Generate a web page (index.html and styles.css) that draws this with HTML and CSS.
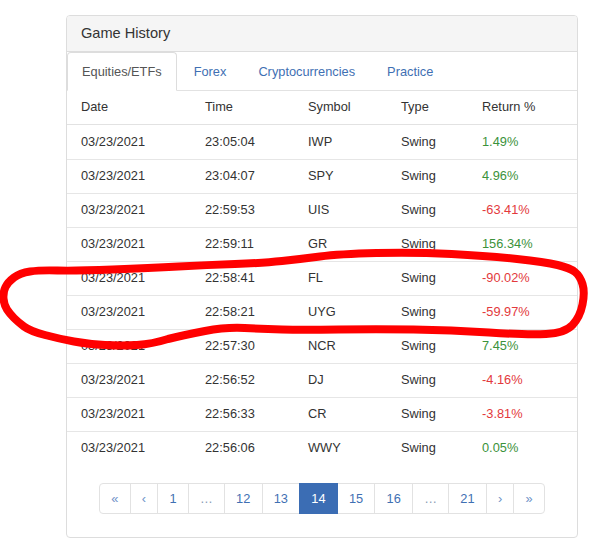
FILE: index.html
```html
<!DOCTYPE html>
<html>
<head>
<meta charset="utf-8">
<link rel="stylesheet" href="styles.css">
</head>
<body>
<div class="panel">
  <div class="panel-heading">Game History</div>
  <ul class="tabs">
    <li class="tab active">Equities/ETFs</li>
    <li class="tab">Forex</li>
    <li class="tab">Cryptocurrencies</li>
    <li class="tab">Practice</li>
  </ul>
  <div class="table">
    <div class="row head"><span>Date</span><span>Time</span><span>Symbol</span><span>Type</span><span>Return %</span></div>
    <div class="row"><span>03/23/2021</span><span>23:05:04</span><span>IWP</span><span>Swing</span><span class="up">1.49%</span></div>
    <div class="row"><span>03/23/2021</span><span>23:04:07</span><span>SPY</span><span>Swing</span><span class="up">4.96%</span></div>
    <div class="row"><span>03/23/2021</span><span>22:59:53</span><span>UIS</span><span>Swing</span><span class="down">-63.41%</span></div>
    <div class="row"><span>03/23/2021</span><span>22:59:11</span><span>GR</span><span>Swing</span><span class="up">156.34%</span></div>
    <div class="row"><span>03/23/2021</span><span>22:58:41</span><span>FL</span><span>Swing</span><span class="down">-90.02%</span></div>
    <div class="row"><span>03/23/2021</span><span>22:58:21</span><span>UYG</span><span>Swing</span><span class="down">-59.97%</span></div>
    <div class="row"><span>03/23/2021</span><span>22:57:30</span><span>NCR</span><span>Swing</span><span class="up">7.45%</span></div>
    <div class="row"><span>03/23/2021</span><span>22:56:52</span><span>DJ</span><span>Swing</span><span class="down">-4.16%</span></div>
    <div class="row"><span>03/23/2021</span><span>22:56:33</span><span>CR</span><span>Swing</span><span class="down">-3.81%</span></div>
    <div class="row"><span>03/23/2021</span><span>22:56:06</span><span>WWY</span><span>Swing</span><span class="up">0.05%</span></div>
  </div>
  <div class="pager-wrap">
    <ul class="pager">
      <li class="pg arrow">«</li>
      <li class="pg arrow">‹</li>
      <li class="pg">1</li>
      <li class="pg dots">…</li>
      <li class="pg">12</li>
      <li class="pg">13</li>
      <li class="pg current">14</li>
      <li class="pg">15</li>
      <li class="pg">16</li>
      <li class="pg dots">…</li>
      <li class="pg">21</li>
      <li class="pg arrow">›</li>
      <li class="pg arrow">»</li>
    </ul>
  </div>
</div>
<svg class="scribble" width="590" height="552" viewBox="0 0 590 552">
  <path d="M14 277.5 Q20 273 30 271.5 Q40 270 57.5 270.5 Q75 271 112.5 269.5 Q150 268 178.5 266.5 Q207 265 235 264 Q263 263 282 261 Q301 259 320 256.5 Q339 254 376.5 253 Q414 252 451.5 254 Q489 256 517 259 Q545 262 557.5 265 Q570 268 575 272 Q580 276 582.5 284 Q585 292 582.5 304.5 Q580 317 572.5 325 Q565 333 546 334 Q527 335 489 332.5 Q451 330 413.5 329.5 Q376 329 338.5 329.5 Q301 330 282 329.5 Q263 329 244.5 328 Q226 327 205 331 Q184 335 168 339 Q152 344 137 345 Q122 346 105 345 Q88 344 74 341.5 Q60 339 45 335 Q30 331 24 326.5 Q18 322 14 318 Q10 314 7 309.5 Q4 305 3.5 298.5 Q3 292 5.5 287 Q8 282 14 277.5 Z"/>
</svg>
</body>
</html>
```

FILE: styles.css
```css
html, body {
  margin: 0;
  padding: 0;
  background: #fff;
}
body {
  font-family: "Liberation Sans", Arial, sans-serif;
  font-size: 12.8px;
  color: #333;
  position: relative;
  width: 590px;
  height: 552px;
  overflow: hidden;
}
.panel {
  box-sizing: border-box;
  width: 512px;
  margin: 15px 0 0 66px;
  border: 1px solid #dddddd;
  border-radius: 4px;
  background: #fff;
  padding-bottom: 23px;
}
.panel-heading {
  height: 35px;
  display: flex;
  align-items: center;
  padding-left: 14px;
  padding-bottom: 1px;
  box-sizing: border-box;
  height: 36px;
  background: #f5f5f5;
  border-bottom: 1px solid #dddddd;
  border-radius: 3px 3px 0 0;
  font-size: 14.6px;
  color: #333;
}
.tabs {
  list-style: none;
  margin: 0;
  padding: 0;
  display: flex;
  height: 39px;
  box-sizing: border-box;
  border-bottom: 1px solid #e2e2e2;
}
.tab {
  box-sizing: border-box;
  height: 39px;
  display: flex;
  align-items: center;
  padding: 0 14px 1px;
  margin-right: 2px;
  border: 1px solid transparent;
  border-radius: 4px 4px 0 0;
  color: #3f70b3;
}
.tab.active {
  color: #555;
  background: #fff;
  border-color: #dddddd;
  border-bottom-color: #fff;
}
.table {
  display: flex;
  flex-direction: column;
}
.row {
  display: grid;
  grid-template-columns: 124px 103px 93px 81px 1fr;
  align-items: center;
  height: 34px;
  box-sizing: border-box;
  padding-left: 14px;
  padding-bottom: 2px;
}
.row.head {
  border-bottom: 1px solid #e2e2e2;
}
.row + .row:not(:nth-child(2)) {
  border-top: 1px solid #e6e6e6;
}
.up {
  color: #3b923b;
}
.down {
  color: #e3393c;
}
.pager-wrap {
  display: flex;
  justify-content: center;
  margin-top: 18px;
}
.pager {
  list-style: none;
  margin: 0;
  padding: 0;
  display: flex;
}
.pg {
  box-sizing: border-box;
  height: 31px;
  display: flex;
  align-items: center;
  justify-content: center;
  padding: 0 11.2px;
  border: 1px solid #e2e2e2;
  margin-left: -1px;
  color: #3f70b3;
  background: #fff;
}
.pg:first-child {
  margin-left: 0;
  border-radius: 4px 0 0 4px;
}
.pg:last-child {
  border-radius: 0 4px 4px 0;
}
.pg.arrow {
  color: #6e92c8;
}
.pg.dots {
  color: #8a9bb5;
}
.pg.current {
  background: #3b6db4;
  border-color: #3b6db4;
  color: #fff;
  position: relative;
}
.scribble {
  position: absolute;
  left: 0;
  top: 0;
  pointer-events: none;
}
.scribble path {
  fill: none;
  stroke: #ff0000;
  stroke-width: 8;
  stroke-linejoin: round;
  stroke-linecap: round;
}
```
